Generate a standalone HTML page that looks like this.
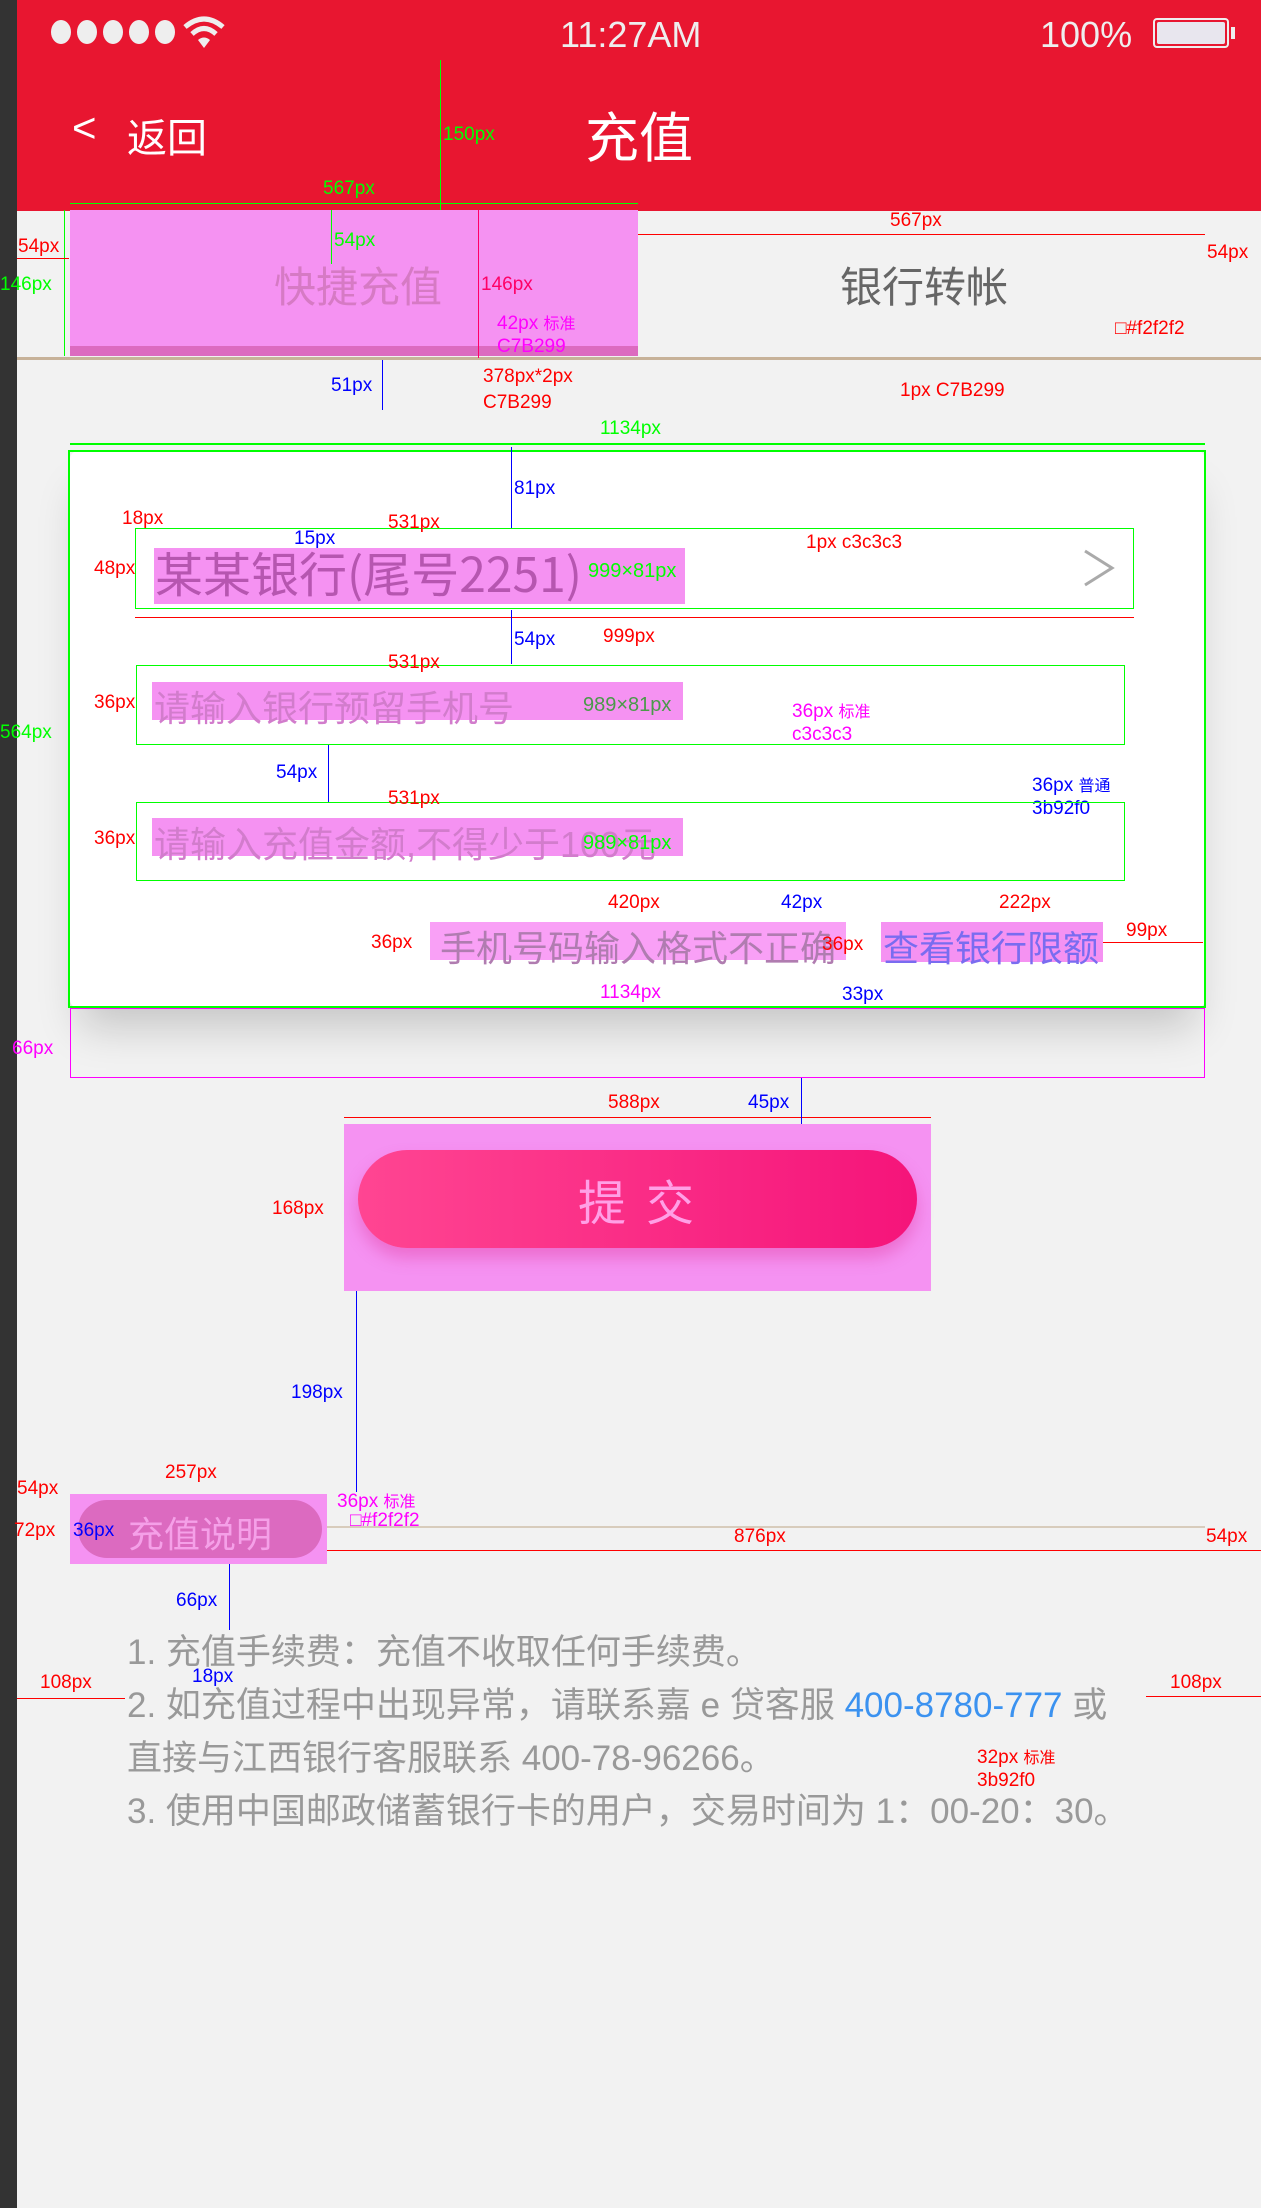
<!DOCTYPE html>
<html><head><meta charset="utf-8">
<style>
*{margin:0;padding:0;box-sizing:border-box}
body{width:1261px;height:2208px;background:#f2f2f2;position:relative;overflow:hidden;font-family:"Liberation Sans","Noto Sans CJK SC",sans-serif}
.a{position:absolute;white-space:nowrap}
.bar{left:0;top:0;width:17px;height:2208px;background:#333}
.hdr{left:17px;top:0;width:1244px;height:211px;background:#e81630}
.w{color:#fff}
.r{color:#f00;font-size:19px}
.b{color:#00f;font-size:19px}
.g{color:#0f0;font-size:19px}
.m{color:#f0f;font-size:19px}
.gl{background:#0f0}
.rl{background:#f00}
.bl{background:#00f}
.ml{background:#f0f}
</style></head><body>
<div class="a bar"></div>
<div class="a hdr"></div>
<!-- status -->
<div class="a" style="left:51px;top:20px;display:flex;gap:6px">
<i style="width:20px;height:24px;border-radius:50%;background:#eee;display:block"></i><i style="width:20px;height:24px;border-radius:50%;background:#eee;display:block"></i><i style="width:20px;height:24px;border-radius:50%;background:#eee;display:block"></i><i style="width:20px;height:24px;border-radius:50%;background:#eee;display:block"></i><i style="width:20px;height:24px;border-radius:50%;background:#eee;display:block"></i></div>
<svg class="a" style="left:182px;top:15px" width="44" height="34" viewBox="0 0 44 34"><path d="M3 12 Q22 -4 41 12" stroke="#eee" stroke-width="5" fill="none"/><path d="M10 19 Q22 8 34 19" stroke="#eee" stroke-width="5" fill="none"/><path d="M16 25 L22 33 L28 25 Q22 20 16 25Z" fill="#eee"/></svg>
<div class="a w" style="left:560px;top:14px;font-size:36px;color:#eee">11:27AM</div>
<div class="a w" style="left:1040px;top:14px;font-size:36px;color:#eee">100%</div>
<div class="a" style="left:1153px;top:18px;width:76px;height:30px;border:2px solid #eee;border-radius:4px;padding:2px"><div style="width:100%;height:100%;background:#e8e6ee;border-radius:2px"></div></div>
<div class="a" style="left:1231px;top:27px;width:4px;height:12px;background:#eee"></div>
<!-- nav -->
<div class="a w" style="left:72px;top:104px;font-size:42px">&lt;</div>
<div class="a w" style="left:127px;top:106px;font-size:40px">返回</div>
<div class="a w" style="left:585px;top:94px;font-size:54px">充值</div>
<div class="a gl" style="left:440px;top:60px;width:1px;height:150px"></div>
<div class="a g" style="left:443px;top:124px">150px</div>
<!-- tabs -->
<div class="a" style="left:70px;top:210px;width:568px;height:146px;background:#f592f2"></div>
<div class="a" style="left:70px;top:346px;width:568px;height:10px;background:#dc6ac0"></div>
<div class="a" style="left:274px;top:254px;font-size:42px;color:#d67ac4">快捷充值</div>
<div class="a" style="left:840px;top:254px;font-size:42px;color:#666">银行转帐</div>
<div class="a" style="left:17px;top:357px;width:1244px;height:3px;background:#c7b299"></div>
<div class="a gl" style="left:70px;top:203px;width:568px;height:1px"></div>
<div class="a g" style="left:323px;top:178px">567px</div>
<div class="a gl" style="left:331px;top:210px;width:1px;height:54px"></div>
<div class="a g" style="left:334px;top:230px">54px</div>
<div class="a gl" style="left:64px;top:210px;width:1px;height:146px"></div>
<div class="a g" style="left:0px;top:274px">146px</div>
<div class="a rl" style="left:17px;top:258px;width:52px;height:1px"></div>
<div class="a r" style="left:18px;top:236px">54px</div>
<div class="a" style="left:478px;top:210px;width:1px;height:148px;background:#f06"></div>
<div class="a" style="left:481px;top:274px;color:#f06;font-size:19px">146px</div>
<div class="a m" style="left:497px;top:310px">42px <span style="font-size:16px">标准</span></div>
<div class="a m" style="left:497px;top:336px">C7B299</div>
<div class="a rl" style="left:638px;top:234px;width:567px;height:1px"></div>
<div class="a r" style="left:890px;top:210px">567px</div>
<div class="a r" style="left:1207px;top:242px">54px</div>
<div class="a r" style="left:483px;top:366px">378px*2px</div>
<div class="a r" style="left:483px;top:392px">C7B299</div>
<div class="a r" style="left:900px;top:380px">1px C7B299</div>
<div class="a r" style="left:1115px;top:318px">□#f2f2f2</div>
<div class="a bl" style="left:382px;top:360px;width:1px;height:50px"></div>
<div class="a b" style="left:331px;top:375px">51px</div>
<!-- card -->
<div class="a" style="left:70px;top:451px;width:1135px;height:557px;background:#fff;border-radius:8px;box-shadow:0 30px 40px -10px rgba(0,0,0,.18)"></div>
<div class="a" style="left:68px;top:450px;width:1138px;height:558px;border:2px solid #0f0"></div>
<div class="a gl" style="left:70px;top:443px;width:1135px;height:2px"></div>
<div class="a g" style="left:600px;top:418px">1134px</div>
<div class="a g" style="left:0px;top:722px">564px</div>
<div class="a bl" style="left:511px;top:447px;width:1px;height:81px"></div>
<div class="a b" style="left:514px;top:478px">81px</div>
<!-- row1 -->
<div class="a" style="left:135px;top:528px;width:999px;height:81px;border:1px solid #0f0"></div>
<div class="a" style="left:154px;top:548px;width:531px;height:56px;background:#f592f2"></div>
<div class="a" style="left:155px;top:547px;font-size:48px;line-height:1;font-weight:normal;color:#b656b0;font-family:'Noto Sans CJK SC',sans-serif">某某银行(尾号2251)</div>
<div class="a g" style="left:588px;top:560px;font-size:20px">999×81px</div>
<svg class="a" style="left:1082px;top:548px" width="34" height="40"><path d="M3 3 L30 20 L3 37" stroke="#aaa" stroke-width="3" fill="none"/></svg>
<div class="a r" style="left:122px;top:508px">18px</div>
<div class="a b" style="left:294px;top:528px">15px</div>
<div class="a r" style="left:388px;top:512px">531px</div>
<div class="a r" style="left:94px;top:558px">48px</div>
<div class="a r" style="left:806px;top:532px">1px c3c3c3</div>
<div class="a rl" style="left:135px;top:617px;width:999px;height:1px"></div>
<div class="a r" style="left:603px;top:626px">999px</div>
<div class="a bl" style="left:511px;top:610px;width:1px;height:54px"></div>
<div class="a b" style="left:514px;top:629px">54px</div>
<!-- row2 -->
<div class="a" style="left:136px;top:665px;width:989px;height:80px;border:1px solid #0f0"></div>
<div class="a" style="left:152px;top:682px;width:531px;height:38px;background:#f592f2"></div>
<div class="a" style="left:154px;top:680px;font-size:36px;color:#d27ccc">请输入银行预留手机号</div>
<div class="a" style="left:583px;top:694px;font-size:20px;color:#4a9a4a">989×81px</div>
<div class="a r" style="left:388px;top:652px">531px</div>
<div class="a r" style="left:94px;top:692px">36px</div>
<div class="a m" style="left:792px;top:698px">36px <span style="font-size:16px">标准</span></div>
<div class="a m" style="left:792px;top:724px">c3c3c3</div>
<div class="a b" style="left:1032px;top:772px">36px <span style="font-size:16px">普通</span></div>
<div class="a b" style="left:1032px;top:798px">3b92f0</div>
<div class="a bl" style="left:328px;top:745px;width:1px;height:57px"></div>
<div class="a b" style="left:276px;top:762px">54px</div>
<!-- row3 -->
<div class="a" style="left:136px;top:802px;width:989px;height:79px;border:1px solid #0f0"></div>
<div class="a" style="left:152px;top:818px;width:531px;height:38px;background:#f592f2"></div>
<div class="a" style="left:154px;top:816px;font-size:36px;color:#d27ccc">请输入充值金额,不得少于100元</div>
<div class="a g" style="left:583px;top:832px;font-size:20px">989×81px</div>
<div class="a r" style="left:388px;top:788px">531px</div>
<div class="a r" style="left:94px;top:828px">36px</div>
<!-- error row -->
<div class="a" style="left:430px;top:922px;width:416px;height:38px;background:#f9a0f6"></div>
<div class="a" style="left:440px;top:920px;font-size:36px;color:#b07cb0">手机号码输入格式不正确</div>
<div class="a" style="left:881px;top:922px;width:222px;height:40px;background:#f592f2"></div>
<div class="a" style="left:883px;top:920px;font-size:36px;color:#7a6cf0">查看银行限额</div>
<div class="a r" style="left:608px;top:892px">420px</div>
<div class="a b" style="left:781px;top:892px">42px</div>
<div class="a r" style="left:999px;top:892px">222px</div>
<div class="a r" style="left:1126px;top:920px">99px</div>
<div class="a rl" style="left:1103px;top:942px;width:100px;height:1px"></div>
<div class="a r" style="left:371px;top:932px">36px</div>
<div class="a r" style="left:822px;top:934px">36px</div>
<div class="a b" style="left:842px;top:984px">33px</div>
<div class="a m" style="left:600px;top:982px">1134px</div>
<div class="a" style="left:70px;top:1008px;width:1135px;height:70px;border:1px solid #f0f"></div>
<div class="a r" style="left:12px;top:1038px;color:#f0f">66px</div>
<!-- submit -->
<div class="a" style="left:344px;top:1124px;width:587px;height:167px;background:#f592f2"></div>
<div class="a" style="left:358px;top:1150px;width:559px;height:98px;border-radius:49px;background:linear-gradient(90deg,#ff4592,#f5147a);box-shadow:0 10px 16px rgba(220,40,140,.35)"></div>
<div class="a" style="left:578px;top:1164px;font-size:48px;color:#ffa0e6;letter-spacing:20px">提交</div>
<div class="a r" style="left:608px;top:1092px">588px</div>
<div class="a rl" style="left:344px;top:1117px;width:587px;height:1px"></div>
<div class="a bl" style="left:801px;top:1078px;width:1px;height:46px"></div>
<div class="a b" style="left:748px;top:1092px">45px</div>
<div class="a r" style="left:272px;top:1198px">168px</div>
<div class="a bl" style="left:356px;top:1291px;width:1px;height:201px"></div>
<div class="a b" style="left:291px;top:1382px">198px</div>
<!-- 充值说明 -->
<div class="a" style="left:70px;top:1494px;width:257px;height:70px;background:#f592f2"></div>
<div class="a" style="left:78px;top:1500px;width:244px;height:58px;border-radius:29px;background:#dc6ac0"></div>
<div class="a" style="left:128px;top:1506px;font-size:36px;color:#f5a0e8">充值说明</div>
<div class="a" style="left:327px;top:1526px;width:878px;height:2px;background:#d8ccbc"></div>
<div class="a rl" style="left:327px;top:1550px;width:934px;height:1px"></div>
<div class="a r" style="left:734px;top:1526px">876px</div>
<div class="a r" style="left:1206px;top:1526px">54px</div>
<div class="a r" style="left:165px;top:1462px">257px</div>
<div class="a r" style="left:17px;top:1478px">54px</div>
<div class="a r" style="left:14px;top:1520px">72px</div>
<div class="a b" style="left:73px;top:1520px">36px</div>
<div class="a m" style="left:337px;top:1488px">36px <span style="font-size:16px">标准</span></div>
<div class="a m" style="left:350px;top:1510px">□#f2f2f2</div>
<div class="a bl" style="left:229px;top:1564px;width:1px;height:66px"></div>
<div class="a b" style="left:176px;top:1590px">66px</div>
<!-- notes -->
<div class="a" style="left:127px;top:1626px;font-size:35px;color:#999;line-height:53px">1. 充值手续费：充值不收取任何手续费。<br>2. 如充值过程中出现异常，请联系嘉 e 贷客服 <span style="color:#3b92f0">400-8780-777</span> 或<br>直接与江西银行客服联系 400-78-96266。<br>3. 使用中国邮政储蓄银行卡的用户，交易时间为 1：00-20：30。</div>
<div class="a r" style="left:40px;top:1672px">108px</div>
<div class="a rl" style="left:17px;top:1698px;width:108px;height:1px"></div>
<div class="a r" style="left:1170px;top:1672px">108px</div>
<div class="a rl" style="left:1146px;top:1696px;width:115px;height:1px"></div>
<div class="a b" style="left:192px;top:1666px">18px</div>
<div class="a r" style="left:977px;top:1744px">32px <span style="font-size:16px">标准</span></div>
<div class="a r" style="left:977px;top:1770px">3b92f0</div>
</body></html>
